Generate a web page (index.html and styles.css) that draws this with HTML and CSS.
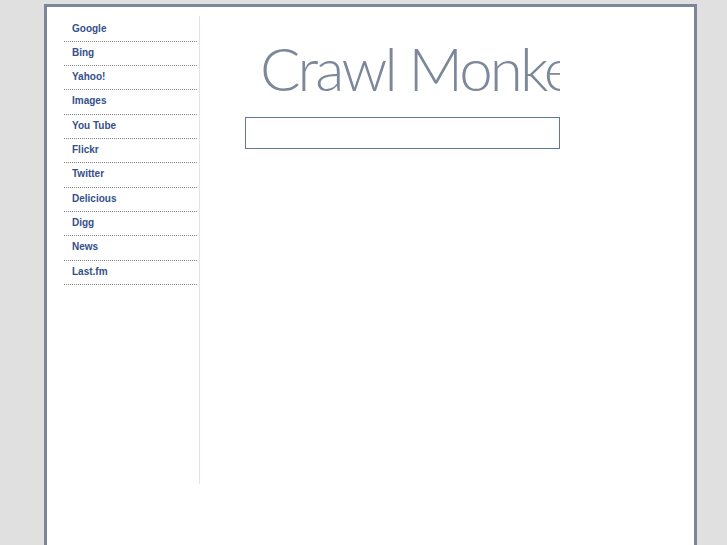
FILE: index.html
```html
<!DOCTYPE html>
<html>
<head>
<meta charset="utf-8">
<title>Crawl Monkey</title>
<link rel="stylesheet" href="styles.css">
</head>
<body>
<div class="page">
  <div class="layout">
    <ul class="menu">
      <li><a href="#">Google</a></li>
      <li><a href="#">Bing</a></li>
      <li><a href="#">Yahoo!</a></li>
      <li><a href="#">Images</a></li>
      <li><a href="#">You Tube</a></li>
      <li><a href="#">Flickr</a></li>
      <li><a href="#">Twitter</a></li>
      <li><a href="#">Delicious</a></li>
      <li><a href="#">Digg</a></li>
      <li><a href="#">News</a></li>
      <li><a href="#">Last.fm</a></li>
    </ul>
    <div class="main">
      <div class="logo">Crawl Monkey</div>
      <input class="search" type="text">
    </div>
  </div>
</div>
</body>
</html>
```

FILE: styles.css
```css
html, body {
  margin: 0;
  padding: 0;
  background: #e0e0e0;
}
.page {
  margin: 4px 0 0 44px;
  width: 647px;
  min-height: 600px;
  background: #fff;
  border: 3px solid #7d8698;
  box-sizing: content-box;
}
.layout {
  display: flex;
  padding: 9px 0 0 17px;
}
.menu {
  list-style: none;
  margin: 0;
  padding: 1.6px 2px 0 0;
  width: 133px;
  height: 466px;
  border-right: 1px solid #dce3f2;
}
.menu li {
  height: 23.3px;
  line-height: 22px;
  border-bottom: 1px dotted #8a8a8a;
}
.menu a {
  display: block;
  padding-left: 8px;
  font-family: "Liberation Sans", Arial, sans-serif;
  font-size: 10px;
  font-weight: bold;
  color: #34508a;
  text-decoration: none;
}
.main {
  padding: 17px 0 0 45px;
}
.logo {
  width: 300px;
  padding-left: 15px;
  overflow: hidden;
  white-space: nowrap;
  font-family: Lato, "Open Sans", sans-serif;
  font-weight: 300;
  font-size: 60px;
  letter-spacing: -2.8px;
  line-height: 70px;
  color: #7d879a;
}
.search {
  display: block;
  margin-top: 14px;
  width: 315px;
  height: 32px;
  box-sizing: border-box;
  border: 1px solid #64759a;
  padding: 0 4px;
  font-family: "Liberation Sans", Arial, sans-serif;
  outline: none;
}
```
